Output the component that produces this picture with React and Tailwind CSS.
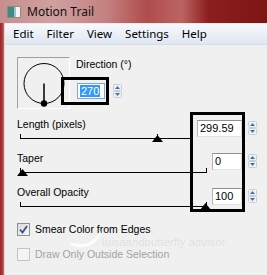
import React from "react";

const dlg = { fontFamily: '"Liberation Sans", Arial, sans-serif' };
const ui = { fontFamily: '"Noto Sans", "Open Sans", sans-serif' };

function Spinner({ className = "" }) {
  return (
    <svg width="9" height="14" viewBox="0 0 9 14" className={className}>
      <rect x="0.5" y="0.5" width="8" height="6" rx="1" fill="#eef2f8" stroke="#c3cedd" />
      <rect x="0.5" y="7.5" width="8" height="6" rx="1" fill="#eef2f8" stroke="#c3cedd" />
      <path d="M4.5 2 L7 5 L2 5 Z" fill="#4f6a94" />
      <path d="M2 9 L7 9 L4.5 12 Z" fill="#4f6a94" />
    </svg>
  );
}

function Input({ value, className = "" }) {
  return (
    <div
      className={`h-[17px] bg-white border border-t-[#8e8f8f] border-l-[#b5b5b5] border-r-[#dadada] border-b-[#e3e3e3] flex items-center pl-[2px] text-[11px] leading-none text-black ${className}`}
      style={dlg}
    >
      {value}
    </div>
  );
}

function Thumb({ left }) {
  return (
    <svg
      width="11"
      height="8"
      viewBox="0 0 11 8"
      className="absolute top-[4px]"
      style={{ left: left - 5.5 }}
    >
      <path d="M5.5 0 L11 7 L0 7 Z" fill="#000" />
    </svg>
  );
}

function Slider({ width, thumb, tick }) {
  return (
    <div className="relative h-[21px] ml-[3px]" style={{ width }}>
      <div className="absolute left-0 right-0 top-[7px] h-px bg-black" />
      <div className="absolute left-0 top-[3px] w-px h-[5px] bg-black" />
      <div className="absolute right-0 top-[3px] w-px h-[5px] bg-black" />
      {tick != null && (
        <div className="absolute top-[3px] w-px h-[4px] bg-black" style={{ left: tick }} />
      )}
      <Thumb left={thumb} />
    </div>
  );
}

export default function App() {
  return (
    <div className="relative w-[267px] h-[275px] overflow-hidden bg-[#f0f0f0] flex flex-col">
      {/* Title bar */}
      <div className="h-[23px] shrink-0 flex items-center bg-[linear-gradient(90deg,#c88e8e_0%,#d0a0a0_20%,#c48080_40%,#b04c4c_55%,#bc6464_68%,#8c1e1e_78%,#7e1515_100%)]">
        <div className="ml-[7px] w-[14px] h-[12px] border border-[#8a8a8a] bg-[#f4f4f4] flex">
          <div className="w-[6px] h-full bg-[#3f8a86]" />
          <div className="w-[2px] h-full bg-[#9ec4c0]" />
        </div>
        <div className="ml-[6px] text-[12px] leading-none text-[#101010]" style={ui}>
          Motion Trail
        </div>
      </div>
      <div className="flex flex-1">
        {/* Left frame */}
        <div className="w-[5px] shrink-0 bg-[linear-gradient(90deg,#962424_0%,#b04040_50%,#c46a6a_75%,#e4d6d6_80%,#e4d6d6_100%)]" />
        <div className="flex-1 flex flex-col">
          {/* Menu */}
          <div
            className="h-[22px] shrink-0 flex items-center pl-[8px] gap-[13px] border-t border-[#f4e8e8] border-b border-b-[#d5dde8] bg-[linear-gradient(180deg,#f7f9fd_0%,#e9eef6_60%,#dfe6f1_100%)] text-[11.5px] text-black"
            style={ui}
          >
            <span>Edit</span>
            <span>Filter</span>
            <span>View</span>
            <span>Settings</span>
            <span>Help</span>
          </div>
          {/* Content */}
          <div className="flex flex-col pt-[12px] pl-[12px]">
            <div className="flex h-[52px]">
              <div className="w-[53px] h-[52px] border-t border-l border-[#a0a0a0] border-r border-b border-r-white border-b-white">
                <svg width="52" height="51" viewBox="0 0 52 51">
                  <circle cx="26" cy="25.5" r="20" fill="none" stroke="#000" strokeWidth="1" />
                  <line x1="26" y1="25.5" x2="26" y2="45.5" stroke="#000" strokeWidth="1.5" />
                  <circle cx="26" cy="45.5" r="3.2" fill="#000" />
                </svg>
              </div>
              <div className="ml-[6px] flex flex-col">
                <div className="text-[10.5px] leading-[13px] mt-[1px] text-black" style={dlg}>
                  Direction (°)
                </div>
                <div className="flex items-start mt-[12px] ml-[1px]">
                  <div
                    className="w-[28px] h-[16px] bg-white border border-[#7aa7de] flex items-center pl-[2px]"
                    style={dlg}
                  >
                    <span className="bg-[#3399ff] text-white text-[11px] leading-[12px] px-[1px]">270</span>
                  </div>
                  <Spinner className="ml-[8px] mt-[1px]" />
                </div>
              </div>
            </div>

            <div className="mt-[9px]">
              <div className="flex items-start h-[34px]">
                <div className="w-[175px]">
                  <div className="text-[10.5px] leading-[13px] text-black" style={dlg}>
                    Length (pixels)
                  </div>
                  <Slider width={171} thumb={137} tick={137} />
                </div>
                <Input value="299.59" className="ml-[5px] mt-[2px] w-[45px]" />
                <Spinner className="ml-[6px] mt-[3px]" />
              </div>
              <div className="flex items-start h-[34px]">
                <div className="w-[190px]">
                  <div className="text-[10.5px] leading-[13px] text-black" style={dlg}>
                    Taper
                  </div>
                  <Slider width={187} thumb={2} />
                </div>
                <Input value="0" className="ml-[5px] mt-[1px] w-[30px]" />
                <Spinner className="ml-[6px] mt-[2px]" />
              </div>
              <div className="flex items-start h-[34px]">
                <div className="w-[190px]">
                  <div className="text-[10.5px] leading-[13px] text-black" style={dlg}>
                    Overall Opacity
                  </div>
                  <Slider width={187} thumb={185} />
                </div>
                <Input value="100" className="ml-[5px] mt-[2px] w-[30px]" />
                <Spinner className="ml-[6px] mt-[3px]" />
              </div>
            </div>

            <div className="flex items-center mt-[3px] h-[13px]">
              <div className="w-[13px] h-[13px] border border-[#8e8f8f] bg-[linear-gradient(135deg,#dcdcdc,#f6f6f6)] flex items-center justify-center">
                <svg width="9" height="9" viewBox="0 0 9 9">
                  <path d="M1 4.5 L3.5 7.5 L8 1" fill="none" stroke="#3a4f8f" strokeWidth="1.8" />
                </svg>
              </div>
              <span className="ml-[5px] text-[10.5px] leading-none text-black" style={dlg}>
                Smear Color from Edges
              </span>
            </div>
            <div className="flex items-center mt-[12px] h-[13px]">
              <div className="w-[13px] h-[13px] border border-[#c4c4c4] bg-[#f4f4f4]" />
              <span className="ml-[5px] text-[10.5px] leading-none text-[#a3a3a3]" style={dlg}>
                Draw Only Outside Selection
              </span>
            </div>
          </div>
        </div>
      </div>

      {/* Watermark */}
      <svg
        width="40"
        height="22"
        viewBox="0 0 40 22"
        className="absolute left-[66px] top-[229px]"
      >
        <path
          d="M2 14 C10 20, 22 20, 30 12 C34 8, 36 4, 34 2 C32 8, 26 14, 16 15 C10 15, 5 14, 2 14 Z"
          fill="#ffffff"
          opacity="0.85"
        />
      </svg>
      <div
        className="absolute left-[102px] top-[237px] text-[11px] leading-none text-[#dcdcdc] tracking-[0.2px]"
        style={{ ...dlg, textShadow: "0 0 1px #fff" }}
      >
        luisaandbutterfly advisor
      </div>

      {/* Annotation boxes */}
      <div className="absolute left-[61px] top-[77px] w-[48px] h-[28px] border-[3px] border-black" />
      <div className="absolute left-[190px] top-[112px] w-[55px] h-[100px] border-[3px] border-black" />
    </div>
  );
}
